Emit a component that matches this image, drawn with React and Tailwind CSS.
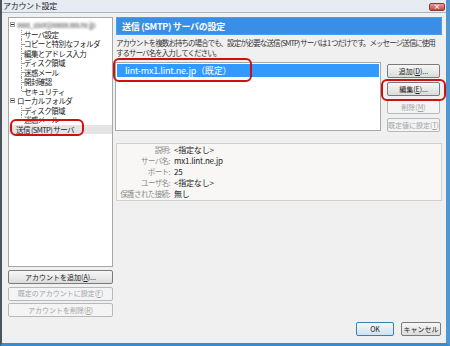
import { useState } from 'react';

// アカウント設定 — 送信 (SMTP) サーバ
const tree = [
  { kind: 'root', label: 'xxxx_user@xxxxx.xxx.ne.jp', blur: true },
  { kind: 'child', label: 'サーバ設定' },
  { kind: 'child', label: 'コピーと特別なフォルダ' },
  { kind: 'child', label: '編集とアドレス入力' },
  { kind: 'child', label: 'ディスク領域' },
  { kind: 'child', label: '迷惑メール' },
  { kind: 'child', label: '開封確認' },
  { kind: 'child', label: 'セキュリティ', last: true },
  { kind: 'root', label: 'ローカルフォルダ' },
  { kind: 'child', label: 'ディスク領域' },
  { kind: 'child', label: '迷惑メール', last: true },
  { kind: 'leaf', label: '送信 (SMTP) サーバ', selected: true },
];

const details = [
  ['説明:', '<指定なし>'],
  ['サーバ名:', 'mx1.lint.ne.jp'],
  ['ポート:', '25'],
  ['ユーザ名:', '<指定なし>'],
  ['保護された接続:', '無し'],
];

function MinusBox() {
  return (
    <span className="w-[5px] h-[5px] shrink-0 border border-[#98a2ab] bg-white flex items-center justify-center">
      <span className="w-[3px] h-px bg-[#333]" />
    </span>
  );
}

function TreeRow({ item }) {
  if (item.kind === 'root') {
    return (
      <div className="flex items-center h-[9.5px] pl-px">
        <MinusBox />
        <span className={`ml-[2px] leading-[9.5px] whitespace-nowrap ${item.blur ? 'blur-[1.2px] text-[#555]' : ''}`}>{item.label}</span>
      </div>
    );
  }
  if (item.kind === 'leaf') {
    return (
      <div className={`flex items-center h-[9.5px] pl-[7px] ${item.selected ? 'bg-[#e4e4e4]' : ''}`}>
        <span className="leading-[9.5px] whitespace-nowrap">{item.label}</span>
      </div>
    );
  }
  return (
    <div className="flex h-[9.5px]">
      <span className="w-[12px] shrink-0" />
      <span className={`relative w-[2px] shrink-0 ${item.last ? 'h-1/2' : 'h-full'} border-l border-dotted border-[#9a9a9a]`}>
        <span className="absolute left-0 top-[4.5px] w-[2px] border-t border-dotted border-[#9a9a9a]" />
      </span>
      <span className="ml-px whitespace-nowrap leading-[9.5px]">{item.label}</span>
    </div>
  );
}

function Btn({ children, disabled, primary, className = '' }) {
  return (
    <button
      className={`h-[14px] flex items-center justify-center rounded-[2px] border text-[7px] leading-none whitespace-nowrap ${
        disabled
          ? 'border-[#b5b9bc] bg-[#f4f4f4] text-[#a3a3a3]'
          : primary
          ? 'border-[#3c7fb1] bg-gradient-to-b from-[#f2f8fc] to-[#cfe3f1] text-[#222]'
          : 'border-[#7b7b7b] bg-gradient-to-b from-[#f7f7f7] to-[#dcdcdc] text-[#222]'
      } ${className}`}
    >
      {children}
    </button>
  );
}

function Callout({ className }) {
  return <div className={`absolute border-2 border-[#cc1111] rounded-[6px] pointer-events-none ${className}`} />;
}

export default function App() {
  const [sel] = useState(0);

  return (
    <div className="relative w-[450px] h-[346px] flex flex-col bg-gradient-to-b from-[#e6ecf2] to-[#cfdbe7] border-l-[2px] border-l-[#4a545e] border-r-[4px] border-r-[#4f97d3] border-b-[3px] border-b-[#3a8bcb] font-['Noto_Sans_CJK_JP','Liberation_Sans',sans-serif] text-[#1e1e1e]">
      {/* title bar */}
      <div className="h-[12px] flex items-center justify-between pl-[1px] pr-[1px]">
        <span className="text-[8px] leading-none tracking-[-0.3px] text-[#222]">アカウント設定</span>
        <span className="w-[16px] h-[8px] mt-[1px] rounded-[2px] border border-[#8a3a3a] bg-gradient-to-b from-[#e59c94] to-[#c2443a] flex items-center justify-center text-white text-[7px] leading-none font-bold">
          ×
        </span>
      </div>

      {/* client */}
      <div className="flex-1 flex bg-[#f0f0f0] border-t border-[#aab6c2]">
        {/* left column */}
        <div className="w-[111px] shrink-0 pl-[6px] pt-[4px] flex flex-col">
          <div className="h-[250px] bg-white border border-[#a7a7a7] pt-[2px] text-[7.5px] tracking-[-0.6px] text-[#222] overflow-hidden">
            {tree.map((item, i) => (
              <TreeRow key={i} item={item} />
            ))}
          </div>
          <div className="mt-[3px] flex flex-col gap-[2.5px]">
            <Btn>アカウントを追加(<u>A</u>)...</Btn>
            <Btn disabled>既定のアカウントに設定(<u>F</u>)</Btn>
            <Btn disabled>アカウントを削除(<u>R</u>)</Btn>
          </div>
        </div>

        {/* right column */}
        <div className="flex-1 min-w-0 flex flex-col pl-[3px] pr-[4px] pt-[4px] pb-[7px]">
          <div className="h-[18px] bg-[#3b8ee6] border border-[#4d9bea] flex items-center pl-[5px]">
            <span className="text-white text-[9px] font-bold tracking-[-0.3px] leading-none">送信 (SMTP) サーバの設定</span>
          </div>

          <p className="mt-[3px] text-[7.5px] leading-[10px] tracking-[-0.95px] text-[#333] whitespace-nowrap">
            アカウントを複数お持ちの場合でも、設定が必要な送信 (SMTP) サーバは 1 つだけです。メッセージ送信に使用
            <br />
            するサーバ名を入力してください。
          </p>

          <div className="mt-[4px] flex">
            <div className="w-[266px] h-[69px] bg-white border border-[#a7a7a7] p-px -ml-[1px]">
              <div className={`h-[13px] flex items-center pl-[8px] ${sel === 0 ? 'bg-[#3399ff] text-white' : ''}`}>
                <span className="text-[9px] leading-none tracking-[-0.2px]">lint-mx1.lint.ne.jp（既定）</span>
              </div>
            </div>
            <div className="ml-[6px] mt-[2px] w-[53px] flex flex-col gap-[4px]">
              <Btn>追加(<u>D</u>)...</Btn>
              <Btn>編集(<u>E</u>)...</Btn>
              <Btn disabled>削除(<u>M</u>)</Btn>
              <Btn disabled>既定値に設定(<u>T</u>)</Btn>
            </div>
          </div>

          <div className="mt-[11px] h-[58px] bg-[#f8f7f5] border border-[#d0d0d0] grid grid-cols-[53px_1fr] gap-x-[4px] content-start">
            {details.map(([k, v]) => (
              <div key={k} className="contents">
                <span className="h-[11px] leading-[11px] text-right text-[7.5px] tracking-[-0.6px] text-[#8a8a8a] whitespace-nowrap">{k}</span>
                <span className="h-[11px] leading-[11px] text-[8px] tracking-[-0.2px] text-[#222]">{v}</span>
              </div>
            ))}
          </div>

          <div className="mt-auto flex justify-end gap-[7px] pr-[1px]">
            <Btn primary className="w-[38px]">OK</Btn>
            <Btn className="w-[40px]">キャンセル</Btn>
          </div>
        </div>
      </div>

      {/* red annotation marks */}
      <Callout className="left-[8px] top-[119px] w-[74px] h-[17px]" />
      <Callout className="left-[111px] top-[58px] w-[139px] h-[24px]" />
      <Callout className="left-[379px] top-[79px] w-[65px] h-[22px]" />
    </div>
  );
}
